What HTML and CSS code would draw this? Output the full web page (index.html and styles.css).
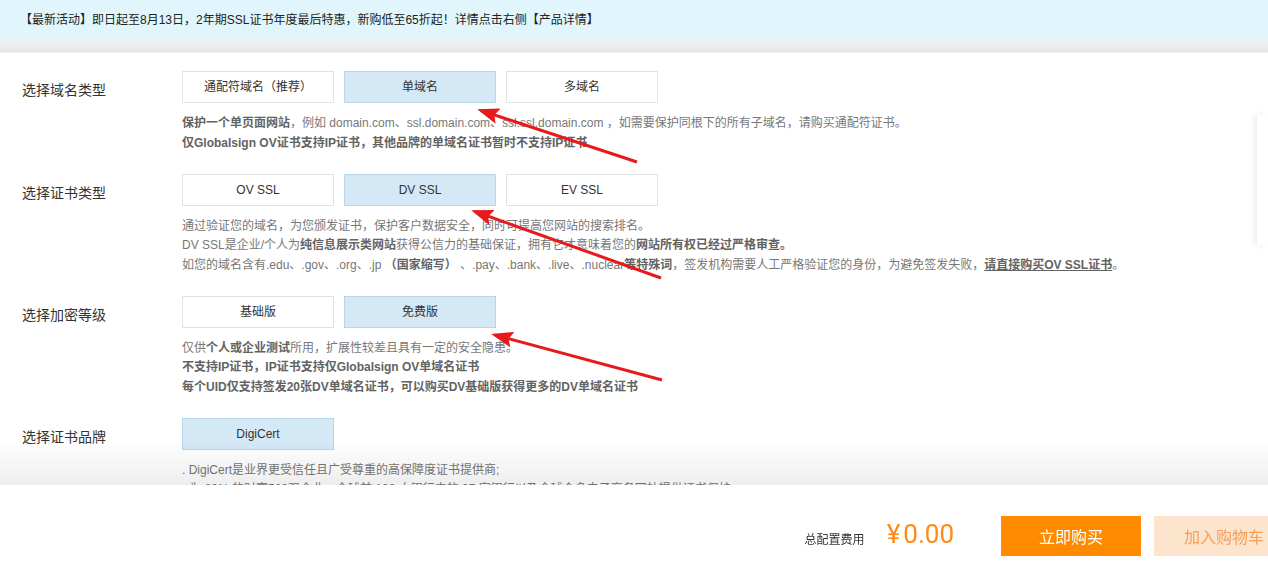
FILE: index.html
```html
<!DOCTYPE html>
<html lang="zh-CN">
<head>
<meta charset="utf-8">
<title>SSL证书购买</title>
<link rel="stylesheet" href="styles.css">
</head>
<body>
<div class="banner">【最新活动】即日起至8月13日，2年期SSL证书年度最后特惠，新购低至65折起！详情点击右侧【产品详情】</div>
<div class="strip"></div>

<div class="main">
  <div class="row">
    <div class="label">选择域名类型</div>
    <div class="body">
      <div class="options">
        <div class="opt">通配符域名（推荐）</div>
        <div class="opt on">单域名</div>
        <div class="opt">多域名</div>
      </div>
      <div class="desc">
        <p><b>保护一个单页面网站</b>，例如 domain.com、ssl.domain.com、ssl.ssl.domain.com ，如需要保护同根下的所有子域名，请购买通配符证书。</p>
        <p><b>仅Globalsign OV证书支持IP证书，其他品牌的单域名证书暂时不支持IP证书</b></p>
      </div>
    </div>
  </div>

  <div class="row">
    <div class="label">选择证书类型</div>
    <div class="body">
      <div class="options">
        <div class="opt">OV SSL</div>
        <div class="opt on">DV SSL</div>
        <div class="opt">EV SSL</div>
      </div>
      <div class="desc">
        <p>通过验证您的域名，为您颁发证书，保护客户数据安全，同时可提高您网站的搜索排名。</p>
        <p>DV SSL是企业/个人为<b>纯信息展示类网站</b>获得公信力的基础保证，拥有它才意味着您的<b>网站所有权已经过严格审查。</b></p>
        <p>如您的域名含有.edu、.gov、.org、.jp <b>（国家缩写）</b> 、.pay、.bank、.live、.nuclear<b>等特殊词</b>，签发机构需要人工严格验证您的身份，为避免签发失败，<b class="link">请直接购买OV SSL证书</b>。</p>
      </div>
    </div>
  </div>

  <div class="row">
    <div class="label">选择加密等级</div>
    <div class="body">
      <div class="options">
        <div class="opt">基础版</div>
        <div class="opt on">免费版</div>
      </div>
      <div class="desc">
        <p>仅供<b>个人或企业测试</b>所用，扩展性较差且具有一定的安全隐患。</p>
        <p><b>不支持IP证书，IP证书支持仅Globalsign OV单域名证书</b></p>
        <p><b>每个UID仅支持签发20张DV单域名证书，可以购买DV基础版获得更多的DV单域名证书</b></p>
      </div>
    </div>
  </div>

  <div class="row">
    <div class="label">选择证书品牌</div>
    <div class="body">
      <div class="options">
        <div class="opt on">DigiCert</div>
      </div>
      <div class="desc">
        <p>. DigiCert是业界更受信任且广受尊重的高保障度证书提供商;</p>
        <p>· 为 89% 的财富500强企业、全球前 100 大银行中的 97 家银行以及全球众多电子商务网站提供证书保护;</p>
        <p>· 支持多种加密算法，兼容所有主流浏览器及移动设备。</p>
      </div>
    </div>
  </div>
</div>

<div class="side-tab"></div>

<div class="footer">
  <div class="footer-inner">
    <span class="total-label">总配置费用</span>
    <span class="price">¥<span class="amount">0.00</span></span>
    <button class="btn-buy">立即购买</button>
    <button class="btn-cart">加入购物车</button>
  </div>
</div>

<svg class="annot" viewBox="0 0 1268 579" width="1268" height="579" xmlns="http://www.w3.org/2000/svg">
  <defs>
    <marker id="ah" markerUnits="userSpaceOnUse" markerWidth="22" markerHeight="16" refX="18" refY="8" orient="auto">
      <path d="M0,0 L22,8 L0,16 L4,8 z" fill="#e8191b"/>
    </marker>
  </defs>
  <line x1="637" y1="162" x2="481" y2="110.5" stroke="#e8191b" stroke-width="3" marker-end="url(#ah)"/>
  <line x1="661" y1="278" x2="475" y2="211.5" stroke="#e8191b" stroke-width="3" marker-end="url(#ah)"/>
  <line x1="662" y1="380" x2="495" y2="335" stroke="#e8191b" stroke-width="3" marker-end="url(#ah)"/>
</svg>
</body>
</html>
```
FILE: styles.css
```css
html, body {
  margin: 0;
  padding: 0;
  overflow: hidden;
  height: 100%;
}
body {
  font-family: "Liberation Sans", "Noto Sans CJK SC", sans-serif;
  color: #333;
  background: #fff;
  position: relative;
}
p { margin: 0; }

.banner {
  height: 40px;
  line-height: 40px;
  background: #e1f6fc;
  padding-left: 20px;
  font-size: 12px;
  color: #222;
  white-space: nowrap;
}
.strip {
  height: 12px;
  background: linear-gradient(#eef2f5, #e5e6e7);
  border-bottom: 1px solid #f3f3f3;
}

.main {
  padding-top: 18px;
}
.row {
  display: grid;
  grid-template-columns: 160px 1fr;
  padding-left: 22px;
  margin-bottom: 20.5px;
}
.label {
  font-size: 14px;
  line-height: 32px;
  padding-top: 3px;
  color: #333;
}
.options {
  display: flex;
  gap: 10px;
}
.opt {
  box-sizing: border-box;
  width: 152px;
  height: 32px;
  line-height: 30px;
  border: 1px solid #e2e2e2;
  background: #fff;
  text-align: center;
  font-size: 12px;
  color: #333;
}
.opt.on {
  background: #d5e8f6;
  border-color: #b7d6ec;
}
.desc {
  margin-top: 11px;
  font-size: 12px;
  line-height: 19.5px;
  color: #777;
  white-space: nowrap;
}
.desc b {
  color: #636363;
  font-weight: bold;
}
.desc b.link {
  text-decoration: underline;
}

.side-tab {
  position: absolute;
  right: 0;
  top: 115px;
  width: 11px;
  height: 130px;
  background: #fff;
  box-shadow: -3px 0 6px rgba(0, 0, 0, 0.07);
}

.footer {
  position: fixed;
  left: 0;
  right: 0;
  bottom: 0;
  height: 94px;
  background: #fff;
}
.footer::before {
  content: "";
  position: absolute;
  left: 0;
  right: 0;
  top: -46px;
  height: 46px;
  background: linear-gradient(rgba(0, 0, 0, 0), rgba(0, 0, 0, 0.065));
}
.footer-inner {
  box-sizing: border-box;
  height: 94px;
  padding-top: 8px;
  display: flex;
  align-items: center;
  justify-content: flex-end;
  margin-right: -26px;
  overflow: hidden;
}
.total-label {
  font-family: "Noto Sans CJK SC", sans-serif;
  font-size: 12px;
  color: #333;
  padding-top: 4px;
}
.price {
  margin-left: 22px;
  font-family: "Roboto", "Liberation Sans", sans-serif;
  font-size: 26px;
  color: #ff8a14;
  margin-top: -4px;
}
.price .amount {
  margin-left: 3px;
}
.btn-buy, .btn-cart {
  width: 140px;
  height: 40px;
  border: none;
  font-family: "Noto Sans CJK SC", sans-serif;
  font-size: 16px;
  padding: 0;
}
.btn-buy {
  margin-left: 47px;
  background: #ff8a00;
  color: #fff;
}
.btn-cart {
  margin-left: 13px;
  background: #fde4cd;
  color: #f6a05b;
}

.annot {
  position: absolute;
  left: 0;
  top: 0;
  pointer-events: none;
  z-index: 10;
}
```
